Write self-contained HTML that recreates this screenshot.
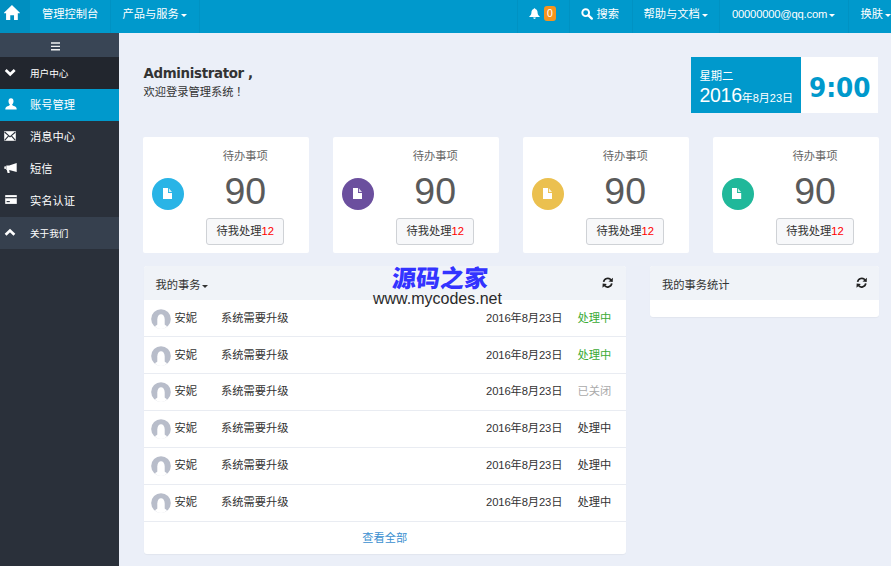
<!DOCTYPE html>
<html lang="zh-CN">
<head>
<meta charset="utf-8">
<title>管理控制台</title>
<style>
*{box-sizing:border-box;margin:0;padding:0}
html,body{width:891px;height:566px;overflow:hidden}
body{background:#ebeff8;font-family:"Liberation Sans","Noto Sans CJK SC",sans-serif;font-size:11.25px;color:#333;position:relative}
.abs{position:absolute}
#top{position:absolute;left:0;top:0;width:891px;height:33px;background:#0099cc;color:#fff}
#top .home{position:absolute;left:0;top:0;width:29.5px;height:33px;background:#008fc0}
#top .it{position:absolute;top:0;height:33px;line-height:28.6px;font-size:11.25px;white-space:nowrap;color:#fff}
.caret{display:inline-block;width:0;height:0;border-left:3px solid transparent;border-right:3px solid transparent;border-top:3px solid currentColor;vertical-align:middle;margin-left:1.8px}
#side{position:absolute;left:0;top:33px;width:119px;height:533px;background:#2a303a}
#side .ham{position:absolute;left:0;top:0;width:119px;height:24px;background:#394555}
#side .row{position:absolute;left:0;width:119px;height:32px;color:#fff;font-size:11.25px;line-height:32px;padding-left:30px;white-space:nowrap}
#side .row.sm{font-size:9.6px;line-height:34px}
#side .row svg{position:absolute}
.card{position:absolute;top:137px;width:166px;height:116px;background:#fff;border-radius:2px}
.card .t{position:absolute;left:38px;width:128px;top:10px;text-align:center;font-size:11.25px;line-height:18px;color:#666}
.card .n{position:absolute;left:38px;width:128px;top:32px;text-align:center;font-size:37.5px;color:#5a5a5a;line-height:44px}
.card .b{position:absolute;left:62.7px;top:81.2px;width:78px;height:26.6px;border:1px solid #cfd2d6;padding-left:0.6px;border-radius:3px;background:#f7f8fa;text-align:center;line-height:24px;font-size:11.25px;color:#333;white-space:nowrap}
.card .b i{font-style:normal;color:#f00}
.card .c{position:absolute;left:8.8px;top:41px;width:32px;height:32px;border-radius:50%}
.card .c svg{position:absolute;left:10.7px;top:10.2px}
.panel{position:absolute;background:#fff;border-radius:3px;overflow:hidden;box-shadow:0 1px 1px rgba(0,0,0,0.04)}
.ph{position:absolute;left:0;top:0;width:100%;height:34px;background:#f0f3f8;line-height:38px;padding-left:12px;font-size:11.25px;color:#333}
.ph svg{position:absolute;top:10.6px}
.li{position:absolute;left:0;width:483px;height:36.85px;border-bottom:1px solid #e9ecf2;line-height:35px;font-size:11.25px;color:#333;white-space:nowrap}
.li svg{position:absolute;left:7px;top:8px}
.li .nm{position:absolute;left:31px}
.li .tt{position:absolute;left:77.5px}
.li .dt{position:absolute;left:342.5px;letter-spacing:-0.12px}
.li .st{position:absolute;left:434px}
</style>
</head>
<body>
<div id="top">
  <div class="home"><svg class="abs" style="left:3.7px;top:5.3px" width="15.9" height="14.9" viewBox="0 0 16 15"><path d="M8 0 L16 7.8 L16 8.2 L13.9 8.2 L13.9 15 L10.1 15 L10.1 10.2 L6.3 10.2 L6.3 15 L2.1 15 L2.1 8.2 L0 8.2 L0 7.8 Z" fill="#fff"/></svg></div>
  <div class="abs" style="left:109.5px;top:0;width:1px;height:33px;background:rgba(0,0,0,0.045)"></div><div class="abs" style="left:199px;top:0;width:1px;height:33px;background:rgba(0,0,0,0.045)"></div><div class="abs" style="left:517px;top:0;width:1px;height:33px;background:rgba(0,0,0,0.045)"></div><div class="abs" style="left:569px;top:0;width:1px;height:33px;background:rgba(0,0,0,0.045)"></div><div class="abs" style="left:632px;top:0;width:1px;height:33px;background:rgba(0,0,0,0.045)"></div><div class="abs" style="left:719px;top:0;width:1px;height:33px;background:rgba(0,0,0,0.045)"></div><div class="abs" style="left:847.5px;top:0;width:1px;height:33px;background:rgba(0,0,0,0.045)"></div>
  <div class="it" style="left:42px">管理控制台</div>
  <div class="it" style="left:122.5px">产品与服务<span class="caret"></span></div>
  <svg class="abs" style="left:529px;top:7.5px" width="11" height="11" viewBox="0 0 11 11"><path d="M5.5 0.2 C4.9 0.2 4.7 0.6 4.7 1 C3 1.5 2.4 3 2.4 4.8 C2.4 6.8 1.4 7.6 0.3 8.4 L0.3 9 L10.7 9 L10.7 8.4 C9.6 7.6 8.6 6.8 8.6 4.8 C8.6 3 8 1.5 6.3 1 C6.3 0.6 6.1 0.2 5.5 0.2Z M4.2 9.6 A1.3 1.3 0 0 0 6.8 9.6Z" fill="#fff"/></svg>
  <div class="abs" style="left:544px;top:5.5px;width:12px;height:15.5px;background:#f7941d;border-radius:3px;color:#fff;font-size:10.5px;line-height:15.5px;text-align:center">0</div>
  <svg class="abs" style="left:581px;top:7.5px" width="12" height="12" viewBox="0 0 12 12"><circle cx="4.7" cy="4.7" r="3.4" fill="none" stroke="#fff" stroke-width="1.9"/><path d="M7.4 7.4 L10.8 10.6" stroke="#fff" stroke-width="2.3" stroke-linecap="round"/></svg>
  <div class="it" style="left:596.5px">搜索</div>
  <div class="it" style="left:643.5px">帮助与文档<span class="caret"></span></div>
  <div class="it" style="left:732px;letter-spacing:-0.22px">00000000@qq.com<span class="caret"></span></div>
  <div class="it" style="left:860.5px">换肤<span class="caret"></span></div>
</div>

<div id="side">
  <div class="ham"><svg class="abs" style="left:51px;top:8.5px" width="9" height="9" viewBox="0 0 9 9"><path d="M0 1h9M0 4.4h9M0 7.8h9" stroke="#fff" stroke-opacity="0.92" stroke-width="1.4"/></svg></div>
  <div class="row sm" style="top:24px;background:#22262e">用户中心<svg style="left:3.9px;top:10.6px" width="12.4" height="9.2" viewBox="0 0 12 9"><path d="M1.6 2 L6 6.2 L10.4 2" fill="none" stroke="#fff" stroke-width="2.6"/></svg></div>
  <div class="row" style="top:56px;background:#0099cc">账号管理<svg style="left:4.5px;top:9.2px" width="12" height="12" viewBox="0 0 12 12"><path d="M6 0.3 C4.3 0.3 3.5 1.6 3.5 3.3 C3.5 4.9 4.2 6 4.9 6.5 C4.9 7.3 3.8 7.7 2.4 8.3 C1 8.9 0.3 9.7 0.3 11.6 L11.7 11.6 C11.7 9.7 11 8.9 9.6 8.3 C8.2 7.7 7.1 7.3 7.1 6.5 C7.8 6 8.5 4.9 8.5 3.3 C8.5 1.6 7.7 0.3 6 0.3Z" fill="#fff"/></svg></div>
  <div class="row" style="top:88px">消息中心<svg style="left:4.3px;top:10px" width="12" height="10" viewBox="0 0 12 10"><path d="M0.2 0.2h11.6v9.6h-11.6z" fill="#fff"/><path d="M0.6 1 L6 5.8 L11.4 1 M0.6 9.4 L4.4 5.2 M11.4 9.4 L7.6 5.2" fill="none" stroke="#2a303a" stroke-width="1.1"/></svg></div>
  <div class="row" style="top:120px">短信<svg style="left:4px;top:10px" width="13" height="10" viewBox="0 0 13 10"><path d="M12.7 0.1 L12.7 9 L5.2 6.9 L2.3 6.9 L2.3 2.6 L5.2 2.4 Z M0.3 3.5 L1.9 3.3 L1.9 6 L0.3 5.8Z M2.8 7.1 L5.2 7.1 L5.7 9.9 L3.6 9.9Z" fill="#fff"/></svg></div>
  <div class="row" style="top:152px">实名认证<svg style="left:4.5px;top:10px" width="12" height="9" viewBox="0 0 12 9"><path d="M0.2 0.1h11.6v8.8h-11.6z" fill="#fff"/><path d="M0.2 2.7h11.6" stroke="#2a303a" stroke-width="1.2"/><path d="M1.6 6.6h3.2" stroke="#2a303a" stroke-width="1.1"/></svg></div>
  <div class="row sm" style="top:184px;height:31.6px;background:#36404e">关于我们<svg style="left:4.2px;top:10.6px" width="12" height="9" viewBox="0 0 12 9"><path d="M1.6 6.8 L6 2.6 L10.4 6.8" fill="none" stroke="#fff" stroke-width="2.6"/></svg></div>
</div>

<div class="abs" style="left:143.5px;top:63.6px;font-family:'DejaVu Sans','Liberation Sans',sans-serif;font-weight:bold;font-size:13.4px;letter-spacing:-0.35px;line-height:20px;color:#333;white-space:nowrap">Administrator ,</div>
<div class="abs" style="left:143.5px;top:82.6px;font-size:11.25px;line-height:18px;color:#333;white-space:nowrap">欢迎登录管理系统<span style="padding-left:2.5px">！</span></div>

<div class="abs" style="left:690.5px;top:57px;width:110.6px;height:56px;background:#0099cc;color:#fff">
  <div class="abs" style="left:9px;top:11.5px;font-size:11.25px;line-height:14px;white-space:nowrap">星期二</div>
  <div class="abs" style="left:9px;top:26px;font-size:11px;line-height:24px;white-space:nowrap"><span style="font-size:19.5px;letter-spacing:-0.3px">2016</span>年8月23日</div>
</div>
<div class="abs" style="left:801.1px;top:57px;width:77.4px;height:56px;background:#fff;color:#0099cc;font-family:'DejaVu Sans','Liberation Sans',sans-serif;font-weight:bold;font-size:24.8px;line-height:63.4px;text-align:center;white-space:nowrap"><span style="display:inline-block;transform:scaleY(1.07);transform-origin:50% 62%">9:00</span></div>

<div class="card" style="left:143.3px"><div class="t">待办事项</div><div class="n">90</div><div class="c" style="background:#29b4e6"><svg width="9.2" height="11.2" viewBox="0 0 9.2 11.2"><path d="M0 0 L5 0 L5 5 L9.2 5 L9.2 11.2 L0 11.2Z" fill="#fff"/><path d="M5.9 0.2 L9 4.1 L5.9 4.1Z" fill="#fff" fill-opacity="0.8"/></svg></div><div class="b">待我处理<i>12</i></div></div>
<div class="card" style="left:333.2px"><div class="t">待办事项</div><div class="n">90</div><div class="c" style="background:#6b4f9e"><svg width="9.2" height="11.2" viewBox="0 0 9.2 11.2"><path d="M0 0 L5 0 L5 5 L9.2 5 L9.2 11.2 L0 11.2Z" fill="#fff"/><path d="M5.9 0.2 L9 4.1 L5.9 4.1Z" fill="#fff" fill-opacity="0.8"/></svg></div><div class="b">待我处理<i>12</i></div></div>
<div class="card" style="left:523.2px"><div class="t">待办事项</div><div class="n">90</div><div class="c" style="background:#ebc04f"><svg width="9.2" height="11.2" viewBox="0 0 9.2 11.2"><path d="M0 0 L5 0 L5 5 L9.2 5 L9.2 11.2 L0 11.2Z" fill="#fff"/><path d="M5.9 0.2 L9 4.1 L5.9 4.1Z" fill="#fff" fill-opacity="0.8"/></svg></div><div class="b">待我处理<i>12</i></div></div>
<div class="card" style="left:713px"><div class="t">待办事项</div><div class="n">90</div><div class="c" style="background:#20b89a"><svg width="9.2" height="11.2" viewBox="0 0 9.2 11.2"><path d="M0 0 L5 0 L5 5 L9.2 5 L9.2 11.2 L0 11.2Z" fill="#fff"/><path d="M5.9 0.2 L9 4.1 L5.9 4.1Z" fill="#fff" fill-opacity="0.8"/></svg></div><div class="b">待我处理<i>12</i></div></div>

<div class="panel" style="left:143.5px;top:266px;width:482.5px;height:288px">
  <div class="ph">我的事务<span class="caret"></span><svg style="left:458.8px" width="11.4" height="11.4" viewBox="0 0 12 12"><g transform="translate(12,0) scale(-1,1)"><path d="M10.3 5.2 A4.4 4.4 0 0 0 2.4 3.2" fill="none" stroke="#222" stroke-width="1.8"/><path d="M1.7 6.8 A4.4 4.4 0 0 0 9.6 8.8" fill="none" stroke="#222" stroke-width="1.8"/><path d="M0.5 0.7 L0.7 5.2 L5.2 4.7Z M11.5 11.3 L11.3 6.8 L6.8 7.3Z" fill="#222"/></g></svg></div>
  <div class="li" style="top:34.65px"><svg width="20" height="20" viewBox="0 0 20 20"><defs><clipPath id="ac"><circle cx="10" cy="10" r="9.8"/></clipPath></defs><circle cx="10" cy="10" r="9.8" fill="#b8bdca"/><g clip-path="url(#ac)" fill="#fff"><path d="M6.3 20 L6.3 10.4 C6.3 3.4 13.7 3.4 13.7 10.4 L13.7 20Z"/><ellipse cx="10" cy="20.4" rx="7" ry="5.6"/><rect x="0" y="18.7" width="20" height="2"/></g></svg><span class="nm">安妮</span><span class="tt">系统需要升级</span><span class="dt">2016年8月23日</span><span class="st" style="color:#3aaa35">处理中</span></div>
  <div class="li" style="top:71.5px"><svg width="20" height="20" viewBox="0 0 20 20"><circle cx="10" cy="10" r="9.8" fill="#b8bdca"/><g clip-path="url(#ac)" fill="#fff"><path d="M6.3 20 L6.3 10.4 C6.3 3.4 13.7 3.4 13.7 10.4 L13.7 20Z"/><ellipse cx="10" cy="20.4" rx="7" ry="5.6"/><rect x="0" y="18.7" width="20" height="2"/></g></svg><span class="nm">安妮</span><span class="tt">系统需要升级</span><span class="dt">2016年8月23日</span><span class="st" style="color:#3aaa35">处理中</span></div>
  <div class="li" style="top:108.35px"><svg width="20" height="20" viewBox="0 0 20 20"><circle cx="10" cy="10" r="9.8" fill="#b8bdca"/><g clip-path="url(#ac)" fill="#fff"><path d="M6.3 20 L6.3 10.4 C6.3 3.4 13.7 3.4 13.7 10.4 L13.7 20Z"/><ellipse cx="10" cy="20.4" rx="7" ry="5.6"/><rect x="0" y="18.7" width="20" height="2"/></g></svg><span class="nm">安妮</span><span class="tt">系统需要升级</span><span class="dt">2016年8月23日</span><span class="st" style="color:#aaa">已关闭</span></div>
  <div class="li" style="top:145.2px"><svg width="20" height="20" viewBox="0 0 20 20"><circle cx="10" cy="10" r="9.8" fill="#b8bdca"/><g clip-path="url(#ac)" fill="#fff"><path d="M6.3 20 L6.3 10.4 C6.3 3.4 13.7 3.4 13.7 10.4 L13.7 20Z"/><ellipse cx="10" cy="20.4" rx="7" ry="5.6"/><rect x="0" y="18.7" width="20" height="2"/></g></svg><span class="nm">安妮</span><span class="tt">系统需要升级</span><span class="dt">2016年8月23日</span><span class="st">处理中</span></div>
  <div class="li" style="top:182.05px"><svg width="20" height="20" viewBox="0 0 20 20"><circle cx="10" cy="10" r="9.8" fill="#b8bdca"/><g clip-path="url(#ac)" fill="#fff"><path d="M6.3 20 L6.3 10.4 C6.3 3.4 13.7 3.4 13.7 10.4 L13.7 20Z"/><ellipse cx="10" cy="20.4" rx="7" ry="5.6"/><rect x="0" y="18.7" width="20" height="2"/></g></svg><span class="nm">安妮</span><span class="tt">系统需要升级</span><span class="dt">2016年8月23日</span><span class="st">处理中</span></div>
  <div class="li" style="top:218.9px"><svg width="20" height="20" viewBox="0 0 20 20"><circle cx="10" cy="10" r="9.8" fill="#b8bdca"/><g clip-path="url(#ac)" fill="#fff"><path d="M6.3 20 L6.3 10.4 C6.3 3.4 13.7 3.4 13.7 10.4 L13.7 20Z"/><ellipse cx="10" cy="20.4" rx="7" ry="5.6"/><rect x="0" y="18.7" width="20" height="2"/></g></svg><span class="nm">安妮</span><span class="tt">系统需要升级</span><span class="dt">2016年8月23日</span><span class="st">处理中</span></div>
  <div class="abs" style="left:0;top:255.5px;width:482.5px;text-align:center;line-height:32.4px;color:#3a8fd0;font-size:11.25px">查看全部</div>
</div>

<div class="panel" style="left:650px;top:266px;width:229px;height:51px">
  <div class="ph">我的事务统计<svg style="left:206px" width="11.4" height="11.4" viewBox="0 0 12 12"><g transform="translate(12,0) scale(-1,1)"><path d="M10.3 5.2 A4.4 4.4 0 0 0 2.4 3.2" fill="none" stroke="#222" stroke-width="1.8"/><path d="M1.7 6.8 A4.4 4.4 0 0 0 9.6 8.8" fill="none" stroke="#222" stroke-width="1.8"/><path d="M0.5 0.7 L0.7 5.2 L5.2 4.7Z M11.5 11.3 L11.3 6.8 L6.8 7.3Z" fill="#222"/></g></svg></div>
</div>

<div class="abs" style="left:391px;top:263.6px;font-size:24px;line-height:30px;font-weight:900;color:#3333ff;white-space:nowrap;text-shadow:0 0 2px rgba(255,255,255,0.7);transform:skewX(-4deg);transform-origin:left bottom">源码之家</div>
<div class="abs" style="left:373px;top:287.8px;font-size:16px;line-height:22px;color:#2a2a2a;white-space:nowrap">www.mycodes.net</div>
</body>
</html>
